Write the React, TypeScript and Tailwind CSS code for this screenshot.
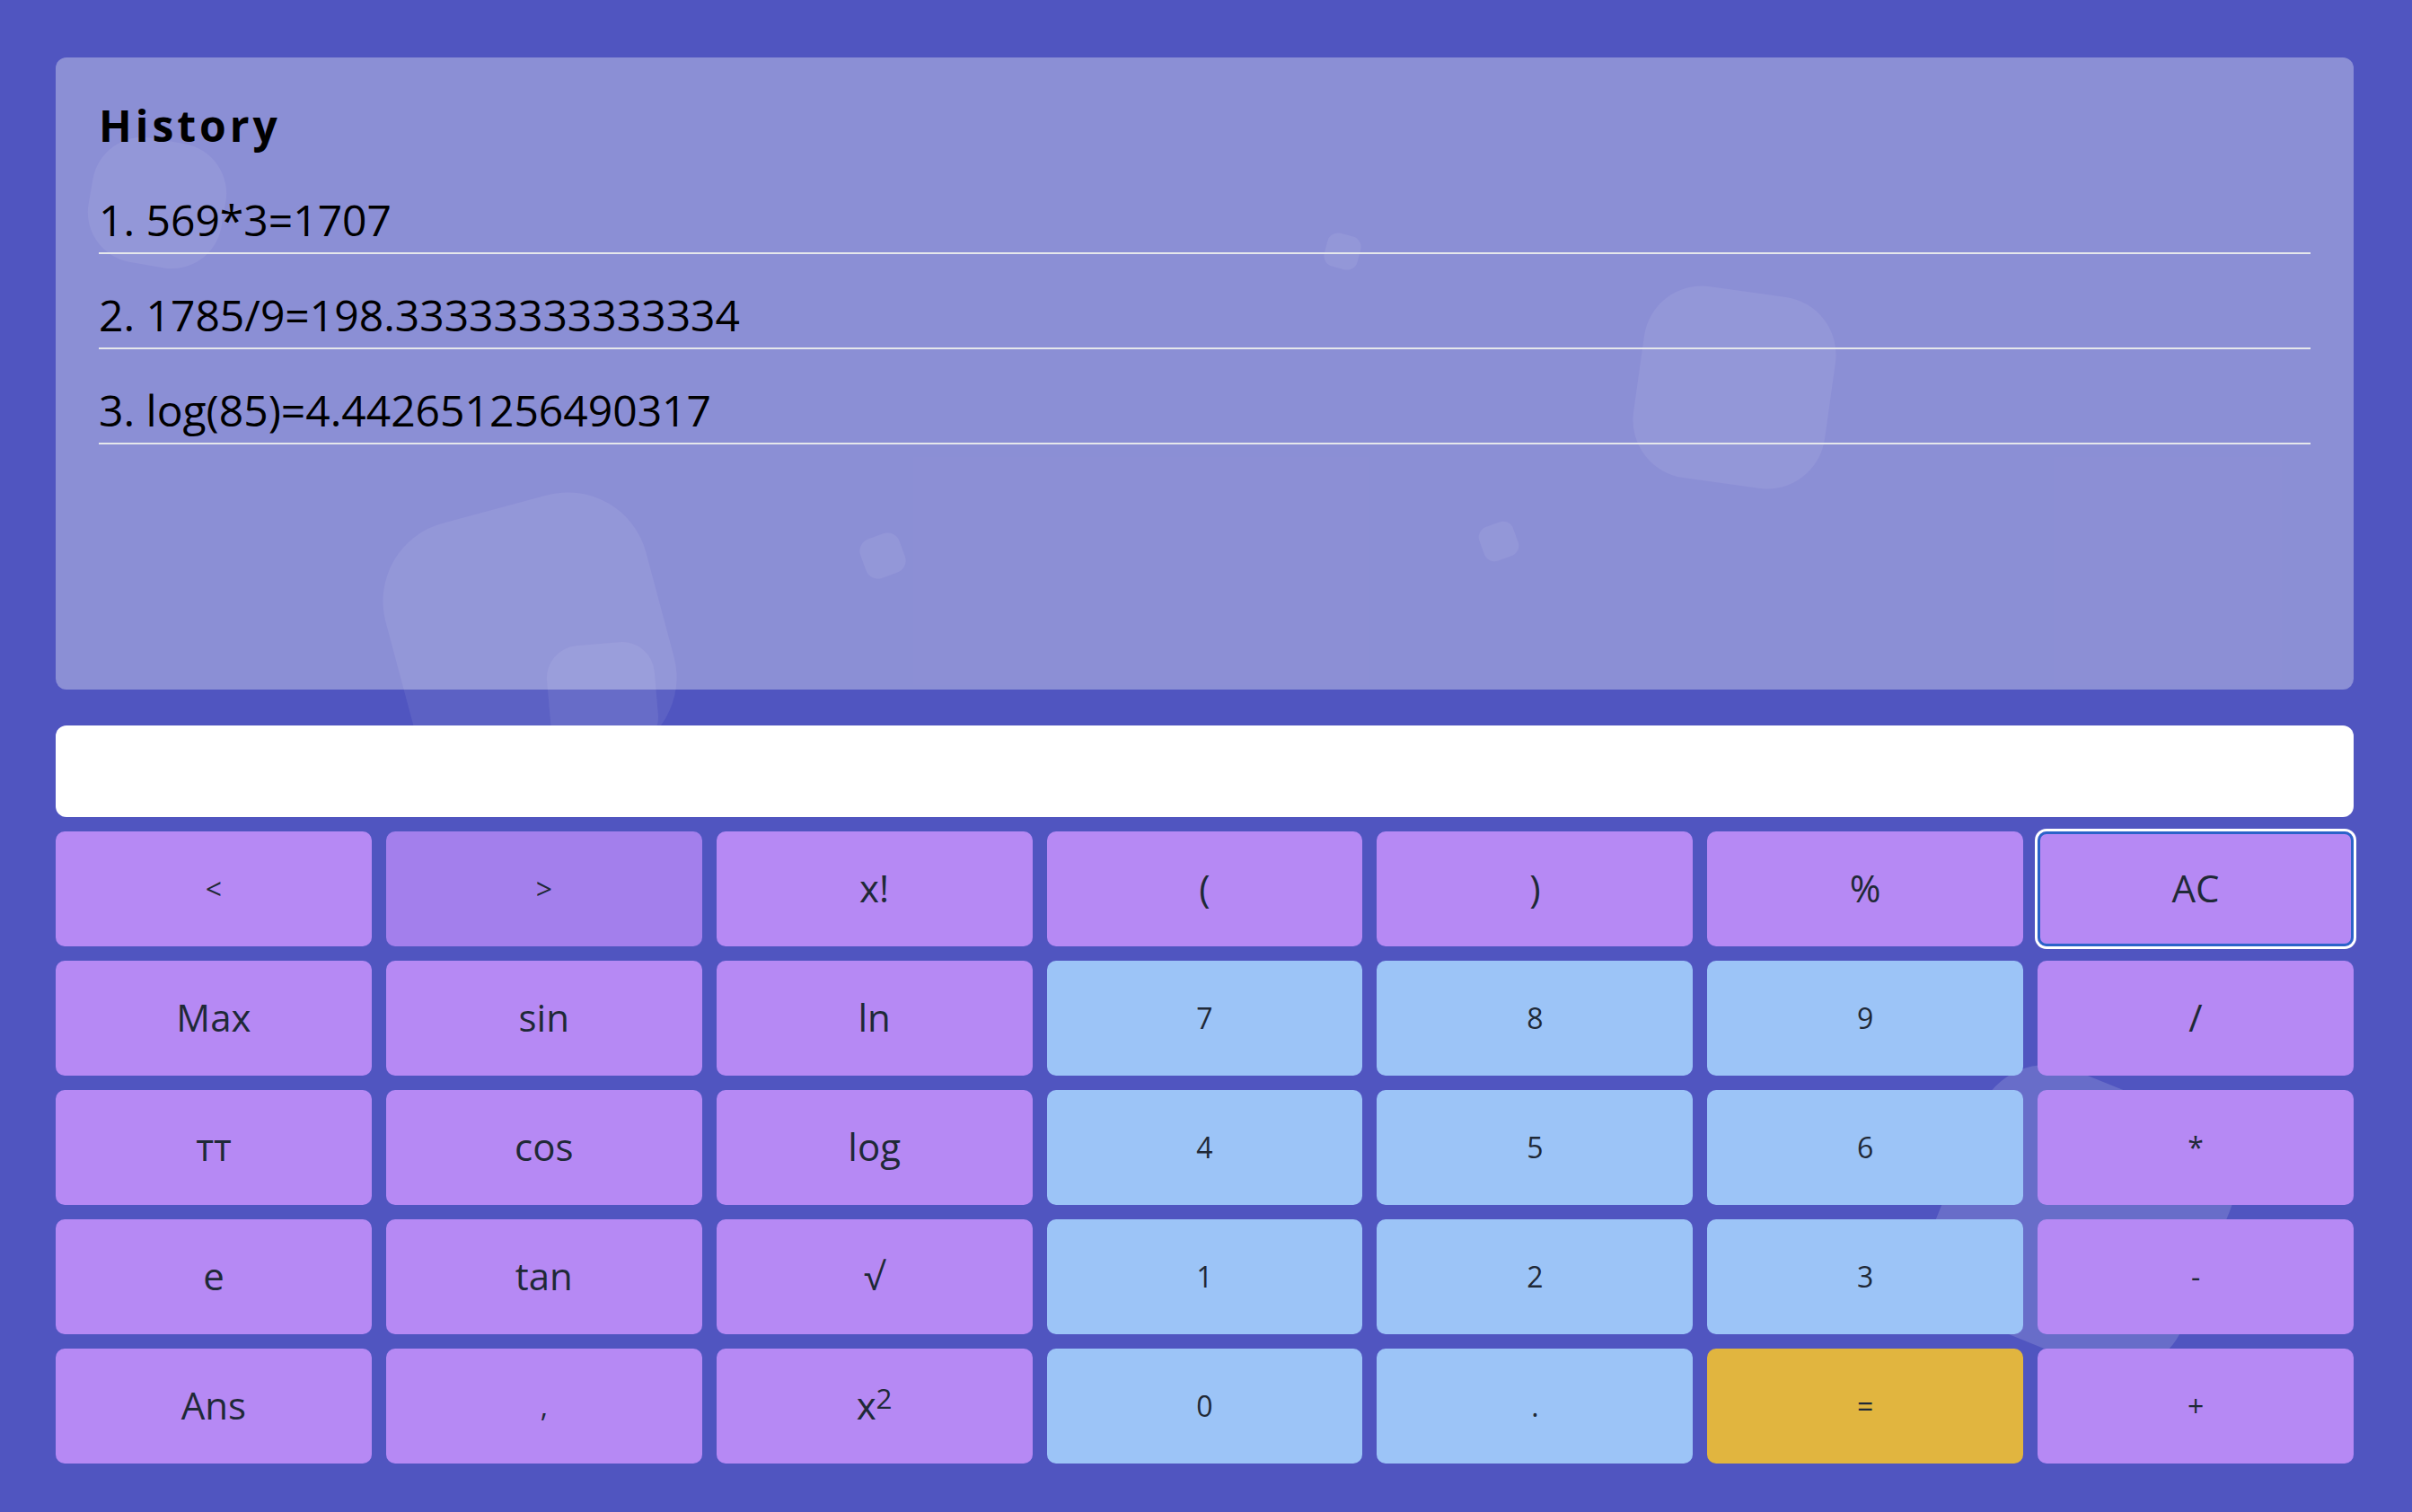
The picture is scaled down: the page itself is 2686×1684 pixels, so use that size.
import type { ReactNode } from 'react'

type Tone = 'violet' | 'violetDark' | 'blue' | 'gold'

type Key = {
  label: ReactNode
  tone: Tone
  small?: boolean
  focused?: boolean
}

const toneClass: Record<Tone, string> = {
  violet: 'bg-[#b689f4]',
  violetDark: 'bg-[#a37fec]',
  blue: 'bg-[#9cc4f7]',
  gold: 'bg-[#e1b53f]',
}

const keys: Key[] = [
  { label: '<', tone: 'violet', small: true },
  { label: '>', tone: 'violetDark', small: true },
  { label: 'x!', tone: 'violet' },
  { label: '(', tone: 'violet' },
  { label: ')', tone: 'violet' },
  { label: '%', tone: 'violet' },
  { label: 'AC', tone: 'violet', focused: true },

  { label: 'Max', tone: 'violet' },
  { label: 'sin', tone: 'violet' },
  { label: 'ln', tone: 'violet' },
  { label: '7', tone: 'blue', small: true },
  { label: '8', tone: 'blue', small: true },
  { label: '9', tone: 'blue', small: true },
  { label: '/', tone: 'violet' },

  { label: 'тт', tone: 'violet' },
  { label: 'cos', tone: 'violet' },
  { label: 'log', tone: 'violet' },
  { label: '4', tone: 'blue', small: true },
  { label: '5', tone: 'blue', small: true },
  { label: '6', tone: 'blue', small: true },
  { label: '*', tone: 'violet', small: true },

  { label: 'e', tone: 'violet' },
  { label: 'tan', tone: 'violet' },
  { label: '√', tone: 'violet' },
  { label: '1', tone: 'blue', small: true },
  { label: '2', tone: 'blue', small: true },
  { label: '3', tone: 'blue', small: true },
  { label: '-', tone: 'violet', small: true },

  { label: 'Ans', tone: 'violet' },
  { label: ',', tone: 'violet', small: true },
  {
    label: (
      <>
        x<sup className="top-[-0.35em]">2</sup>
      </>
    ),
    tone: 'violet',
  },
  { label: '0', tone: 'blue', small: true },
  { label: '.', tone: 'blue', small: true },
  { label: '=', tone: 'gold', small: true },
  { label: '+', tone: 'violet', small: true },
]

const history = ['1. 569*3=1707', '2. 1785/9=198.33333333333334', '3. log(85)=4.442651256490317']

// faint rounded squares floating behind the panel and the keypad
function Bubbles() {
  return (
    <div aria-hidden="true" className="pointer-events-none absolute inset-0 z-0">
      <div className="absolute left-[100px] top-[156px] h-[140px] w-[150px] rotate-[10deg] rounded-[56px] bg-white/[0.07]" />
      <div className="absolute left-[440px] top-[562px] h-[300px] w-[300px] rotate-[-15deg] rounded-[90px] bg-white/[0.07]" />
      <div className="absolute left-[611px] top-[717px] h-[120px] w-[120px] rotate-[-5deg] rounded-[36px] bg-white/[0.07]" />
      <div className="absolute left-[960px] top-[596px] h-[46px] w-[46px] rotate-[-20deg] rounded-[14px] bg-white/[0.07]" />
      <div className="absolute left-[1476px] top-[261px] h-[38px] w-[38px] rotate-[15deg] rounded-[12px] bg-white/[0.07]" />
      <div className="absolute left-[1649px] top-[583px] h-[40px] w-[40px] rotate-[-20deg] rounded-[12px] bg-white/[0.07]" />
      <div className="absolute left-[1824px] top-[324px] h-[215px] w-[215px] rotate-[8deg] rounded-[65px] bg-white/[0.07]" />
      <div className="absolute left-[2168px] top-[1207px] h-[300px] w-[300px] rotate-[22deg] rounded-[80px] bg-white/[0.14]" />
    </div>
  )
}

export default function App() {
  return (
    <div className="relative min-h-screen overflow-hidden bg-[#5055c0] pb-[54px] pl-[62px] pr-[65px] pt-[64px] font-['Open_Sans',sans-serif]">
      <Bubbles />

      <div className="relative z-10 flex flex-col">
        <section className="h-[704px] rounded-[12px] bg-white/[0.34] px-[48px] pt-[43px] text-black">
          <h2 className="mb-[40px] text-[48px] font-bold leading-[65px] tracking-[4px]">History</h2>
          <ul className="flex flex-col gap-[35px]">
            {history.map((row) => (
              <li key={row} className="border-b-2 border-[#e5e7eb] pb-[3px] text-[48px] leading-[66px]">
                {row}
              </li>
            ))}
          </ul>
        </section>

        <input
          readOnly
          aria-label="expression"
          className="mt-[40px] block h-[102px] w-full rounded-[12px] border-0 bg-white px-[24px] text-[48px] outline-none"
        />

        <div className="mt-[16px] grid grid-cols-7 gap-[16px]">
          {keys.map((key, i) => (
            <button
              key={i}
              type="button"
              className={`flex h-[128px] items-center justify-center rounded-[10px] text-[#1f2937] ${toneClass[key.tone]} ${
                key.small ? 'text-[32px]' : 'pb-[4px] text-[42px]'
              } ${key.focused ? 'shadow-[inset_0_0_0_3px_#2b63c9,0_0_0_3px_#ffffff]' : ''}`}
            >
              <span>{key.label}</span>
            </button>
          ))}
        </div>
      </div>
    </div>
  )
}
